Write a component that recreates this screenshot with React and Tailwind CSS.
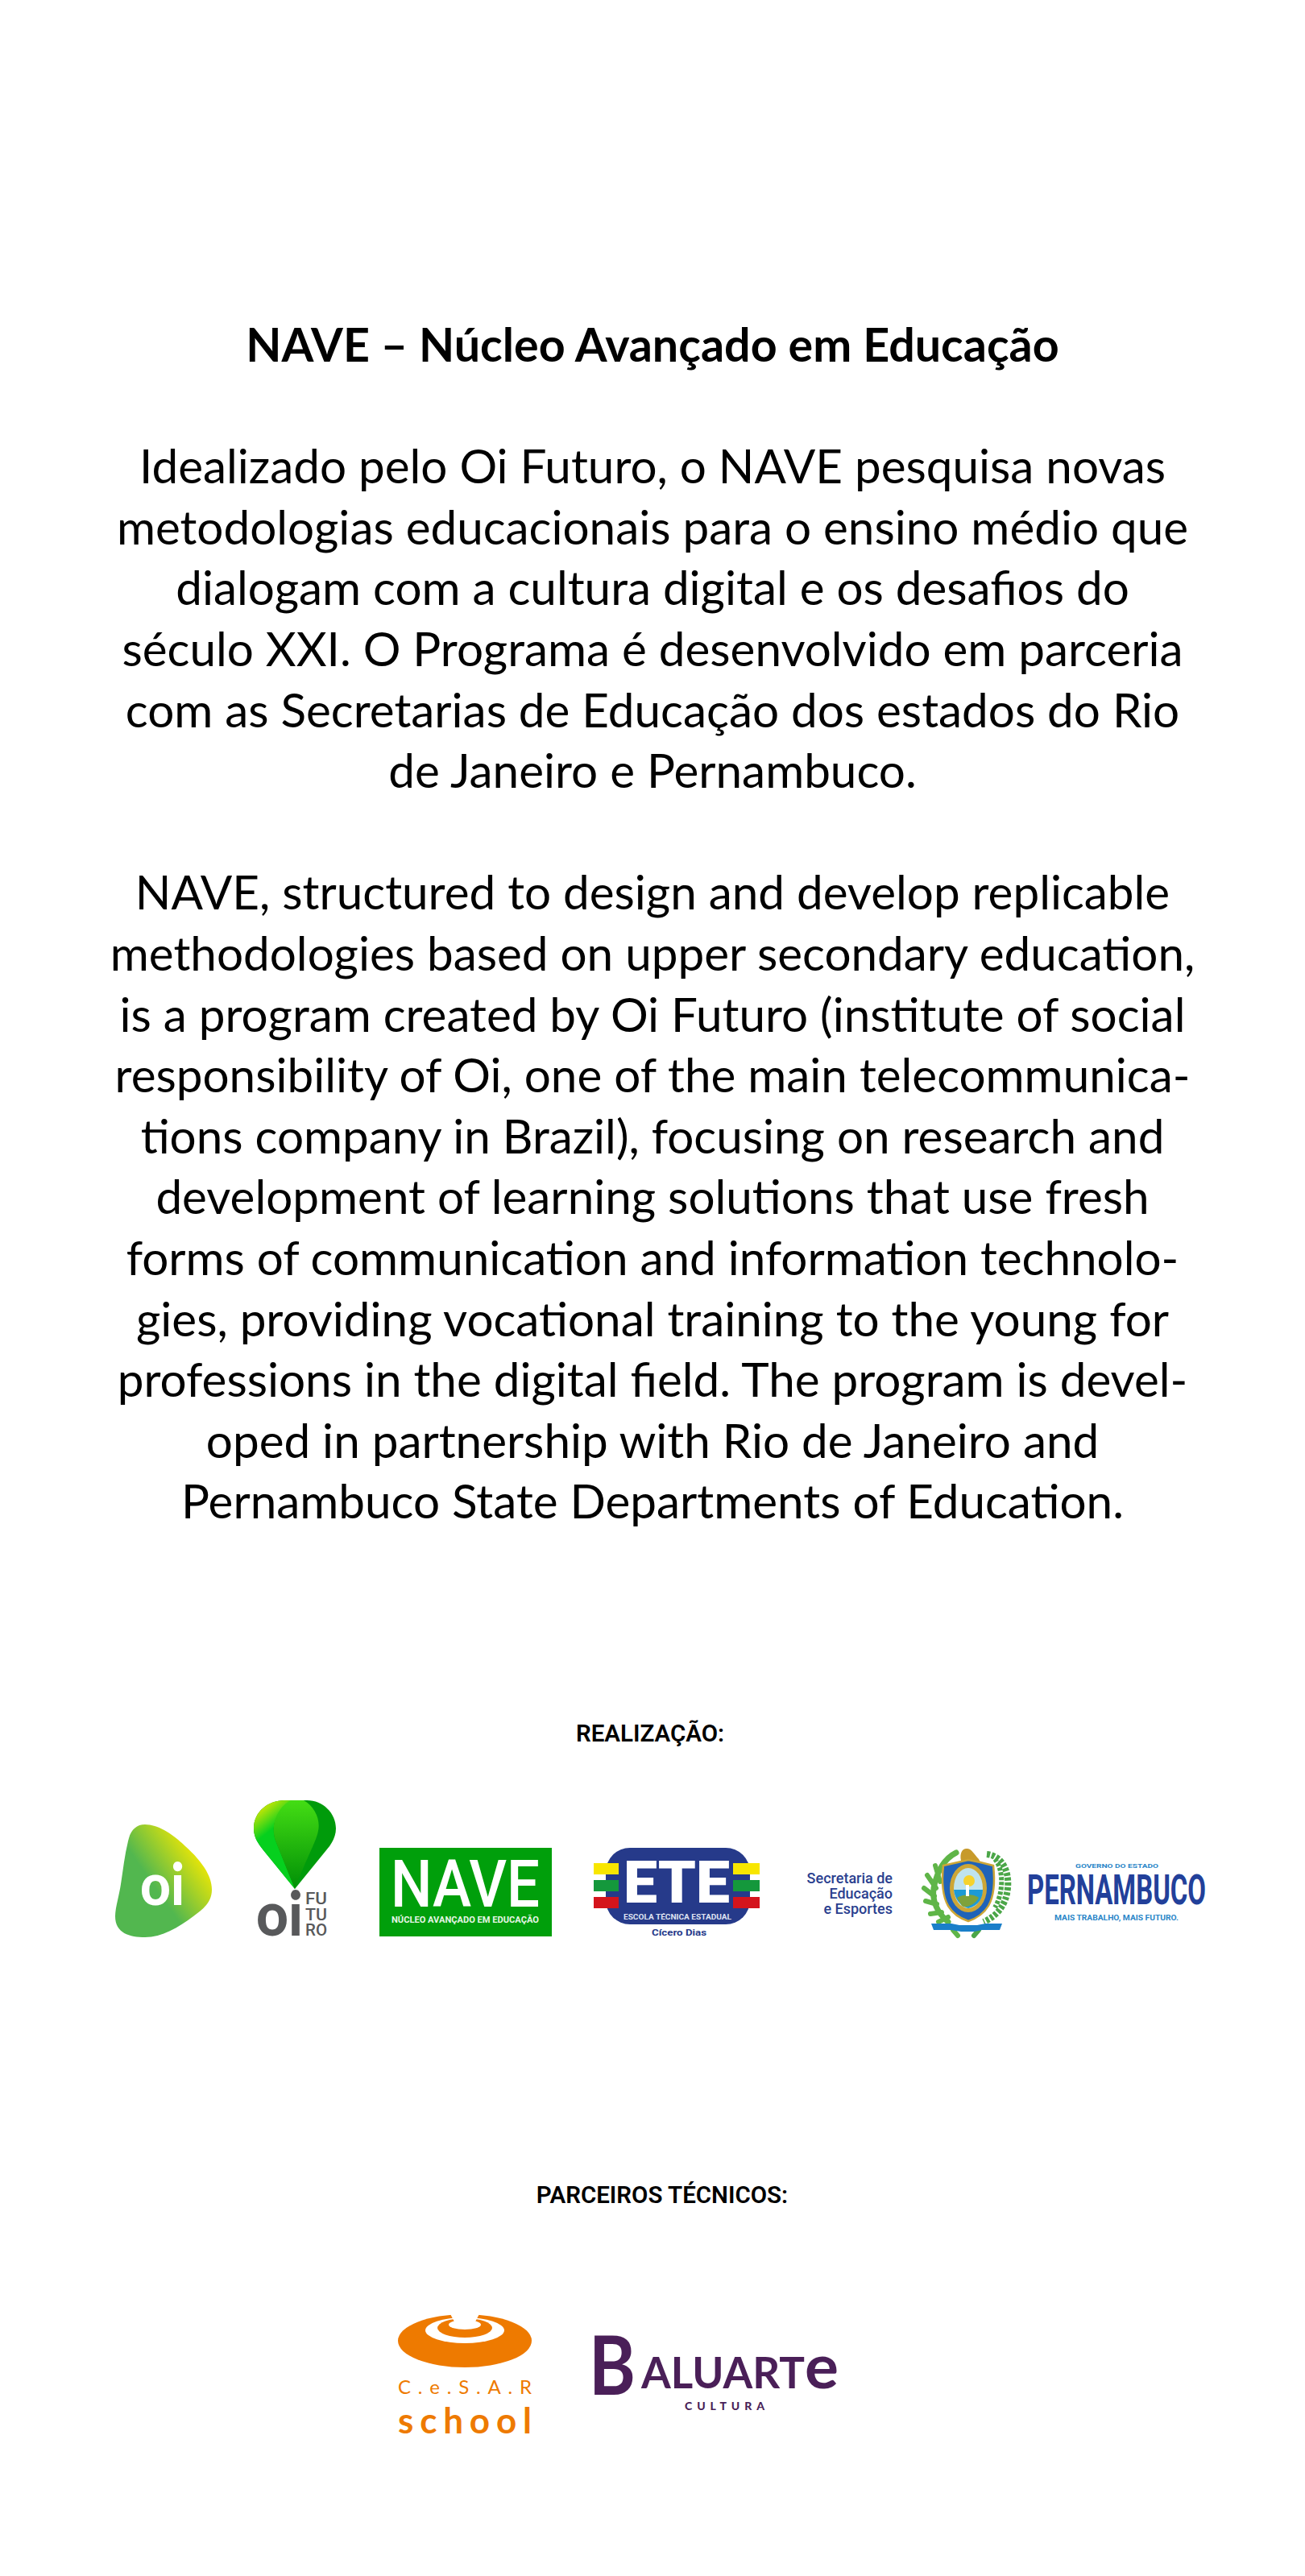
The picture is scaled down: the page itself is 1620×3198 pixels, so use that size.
import React from 'react';

const intro = [
  'Idealizado pelo Oi Futuro, o NAVE pesquisa novas',
  'metodologias educacionais para o ensino médio que',
  'dialogam com a cultura digital e os desafios do',
  'século XXI. O Programa é desenvolvido em parceria',
  'com as Secretarias de Educação dos estados do Rio',
  'de Janeiro e Pernambuco.',
];

const english = [
  'NAVE, structured to design and develop replicable',
  'methodologies based on upper secondary education,',
  'is a program created by Oi Futuro (institute of social',
  'responsibility of Oi, one of the main telecommunica-',
  'tions company in Brazil), focusing on research and',
  'development of learning solutions that use fresh',
  'forms of communication and information technolo-',
  'gies, providing vocational training to the young for',
  'professions in the digital field. The program is devel-',
  'oped in partnership with Rio de Janeiro and',
  'Pernambuco State Departments of Education.',
];

function OiLogo() {
  return (
    <svg width="120" height="141" viewBox="0 0 120 141" className="shrink-0 overflow-visible">
      <defs>
        <linearGradient id="oiFill" gradientUnits="userSpaceOnUse" x1="108" y1="34" x2="48" y2="76">
          <stop offset="0" stopColor="#f7ea00" />
          <stop offset="1" stopColor="#52b74f" />
        </linearGradient>
      </defs>
      <path
        d="M37 0C55 0 75 15 87 27C105 43 120 62 120 81C120 97 108 106 97 114C78 128 58 140 37 140C18 140 0 135 0 114C0 103 5 88 7 74C10 55 12 35 17 17C20 6 27 0 37 0Z"
        fill="url(#oiFill)"
      />
      <text x="31" y="100" fontFamily="Lato" fontWeight="900" fontSize="72" fill="#fff" textLength="55" lengthAdjust="spacingAndGlyphs">oi</text>
    </svg>
  );
}

function OiFuturoLogo() {
  return (
    <svg width="102" height="171" viewBox="0 0 102 171" className="shrink-0 overflow-visible">
      <defs>
        <linearGradient id="balloonLeft" gradientUnits="userSpaceOnUse" x1="8" y1="2" x2="30" y2="30">
          <stop offset="0" stopColor="#f4ea00" />
          <stop offset="1" stopColor="#06d01e" />
        </linearGradient>
        <linearGradient id="balloonMid" gradientUnits="userSpaceOnUse" x1="50" y1="0" x2="50" y2="110">
          <stop offset="0" stopColor="#44dd14" />
          <stop offset="1" stopColor="#008f06" />
        </linearGradient>
      </defs>
      <path d="M51 110L12 62C4 52 0 45 0 35C0 14 18 0 38 0H66C86 0 102 16 102 35C102 45 97 54 90 62Z" fill="#009b0b" />
      <path d="M51 110L12 62C4 52 0 45 0 35C0 14 18 0 38 0H50C30 10 20 30 27 50Z" fill="url(#balloonLeft)" />
      <path d="M51 110L27 50C20 30 30 8 46 0H62C76 8 83 24 80 38C78 50 68 66 51 110Z" fill="url(#balloonMid)" />
      <text x="3" y="168" fontFamily="Lato" fontWeight="900" fontSize="76" fill="#58595b" textLength="58" lengthAdjust="spacingAndGlyphs">oi</text>
      <g fontFamily="Roboto" fontWeight="500" fontSize="20" fill="#58595b">
        <text x="64" y="129" textLength="27" lengthAdjust="spacingAndGlyphs">FU</text>
        <text x="64" y="149" textLength="27" lengthAdjust="spacingAndGlyphs">TU</text>
        <text x="64" y="168" textLength="27" lengthAdjust="spacingAndGlyphs">RO</text>
      </g>
    </svg>
  );
}

function NaveLogo() {
  return (
    <svg width="214" height="110" viewBox="0 0 214 110" className="shrink-0 mb-[2px] overflow-visible">
      <rect width="214" height="110" fill="#009f0b" />
      <text x="14" y="73" fontFamily="Roboto" fontWeight="500" fontSize="82" fill="#fff" textLength="185" lengthAdjust="spacingAndGlyphs">NAVE</text>
      <text x="15" y="93" fontFamily="Roboto" fontWeight="700" fontSize="11" fill="#e6f6e6" textLength="183" lengthAdjust="spacingAndGlyphs">NÚCLEO AVANÇADO EM EDUCAÇÃO</text>
    </svg>
  );
}

function EteLogo() {
  return (
    <svg width="206" height="110" viewBox="0 0 206 110" className="shrink-0 mb-[2px] overflow-visible">
      <rect x="15" y="0" width="179" height="95" rx="30" fill="#263a8a" />
      <rect x="0" y="19" width="31" height="14" fill="#f8e600" />
      <rect x="0" y="40" width="31" height="14" fill="#14983c" />
      <rect x="0" y="61" width="31" height="14" fill="#d4141c" />
      <rect x="173" y="19" width="33" height="14" fill="#f8e600" />
      <rect x="173" y="40" width="33" height="14" fill="#14983c" />
      <rect x="173" y="61" width="33" height="14" fill="#d4141c" />
      <text x="37" y="68" fontFamily="Roboto" fontWeight="900" fontSize="73" fill="#fff" textLength="132" lengthAdjust="spacingAndGlyphs">ETE</text>
      <text x="37" y="89" fontFamily="Roboto" fontWeight="700" fontSize="9" fill="#dfe3f2" textLength="134" lengthAdjust="spacingAndGlyphs">ESCOLA TÉCNICA ESTADUAL</text>
      <text x="72" y="109" fontFamily="Roboto" fontWeight="700" fontSize="11" fill="#263a8a" textLength="68" lengthAdjust="spacingAndGlyphs">Cícero Dias</text>
    </svg>
  );
}

function Secretaria() {
  return (
    <div className="shrink-0 w-[108px] mb-[27px] text-right font-[Roboto,sans-serif] font-medium text-[18px] leading-[19px] text-[#2a3f8f] whitespace-nowrap">
      Secretaria de<br />Educação<br />e Esportes
    </div>
  );
}

function PernambucoLogo() {
  return (
    <svg width="350" height="110" viewBox="0 0 350 110" className="shrink-0 mb-[2px] overflow-visible">
      {/* palm branch */}
      <g fill="none" stroke="#5fb548" strokeLinecap="round">
        <path d="M40 6C24 14 16 30 12 50C10 66 16 80 30 92" strokeWidth="7" />
        <path d="M14 22L20 42M4 34L15 50M0 50L13 60M2 66L16 70M8 82L22 80M18 92L30 86M36 102L42 109" strokeWidth="6" />
      </g>
      {/* laurel */}
      <g fill="none" stroke="#4ba648" strokeWidth="8" strokeDasharray="4 2">
        <path d="M78 8C98 10 106 30 104 50C102 70 92 84 74 92" />
        <path d="M88 14C100 28 98 58 88 74" strokeWidth="6" />
      </g>
      <path d="M68 102L62 109" fill="none" stroke="#4ba648" strokeWidth="6" strokeLinecap="round" />
      {/* lion */}
      <path d="M46 16C44 6 48 0 54 1C60 2 62 8 68 14L70 18H46Z" fill="#c79a2b" />
      {/* shield */}
      <path d="M24 22L42 18L55 15L70 18L86 22C88 40 88 58 80 72C74 82 64 88 55 91C46 88 36 82 30 72C22 58 22 40 24 22Z" fill="#1f63b8" stroke="#cda636" strokeWidth="2.5" />
      <ellipse cx="55" cy="50" rx="23" ry="30" fill="#cda636" />
      <ellipse cx="55" cy="50" rx="18" ry="25" fill="#bfe3ee" />
      <circle cx="56" cy="41" r="7" fill="#f6d22c" />
      <path d="M37 52H73C73 62 68 72 55 75C44 72 38 62 37 52Z" fill="#1d9ad6" />
      <path d="M41 62C50 56 64 58 68 62C64 70 52 76 47 72Z" fill="#7ea23c" />
      <rect x="52" y="46" width="4" height="14" fill="#fff" />
      {/* ribbon */}
      <path d="M9 94H34L44 96H66L76 94H97L94 102H72L62 104H46L34 102H12Z" fill="#1a7fc9" />
      <g fontFamily="Roboto" fontWeight="700" fill="#2a86c8">
        <text x="188" y="25" fontSize="8" textLength="103" lengthAdjust="spacingAndGlyphs">GOVERNO DO ESTADO</text>
        <text x="162" y="90" fontSize="9.5" textLength="154" lengthAdjust="spacingAndGlyphs">MAIS TRABALHO, MAIS FUTURO.</text>
      </g>
      <text x="128" y="70" fontFamily="Roboto" fontWeight="700" fontSize="52" fill="#22409a" textLength="222" lengthAdjust="spacingAndGlyphs">PERNAMBUCO</text>
    </svg>
  );
}

function CesarLogo() {
  return (
    <svg width="166" height="150" viewBox="0 0 166 150" className="shrink-0 overflow-visible">
      <ellipse cx="83" cy="34" rx="83" ry="33" fill="#ee7a00" />
      <ellipse cx="83" cy="21" rx="49" ry="16" fill="#fff" />
      <ellipse cx="83" cy="18" rx="34" ry="12" fill="#ee7a00" />
      <ellipse cx="83" cy="14" rx="20" ry="6" fill="#fff" />
      <path d="M64 -1H102L94 14H72Z" fill="#fff" />
      <g fontFamily="Lato" fill="#ee7a00">
        <text x="0" y="100" fontSize="24" textLength="166">C.e.S.A.R</text>
        <text x="0" y="149" fontSize="44" fontWeight="700" textLength="166">school</text>
      </g>
    </svg>
  );
}

function BaluarteLogo() {
  return (
    <svg width="304" height="93" viewBox="0 0 304 93" className="shrink-0 overflow-visible">
      <g fontFamily="Lato" fill="#4a1f58">
        <text x="-6" y="73" fontSize="101" fontWeight="700" textLength="58" lengthAdjust="spacingAndGlyphs">B</text>
        <text x="59" y="65" fontSize="54" fontWeight="700" textLength="203" lengthAdjust="spacingAndGlyphs">ALUART</text>
        <text x="262" y="65" fontSize="76" fontWeight="700" textLength="42" lengthAdjust="spacingAndGlyphs">e</text>
        <text x="113" y="92" fontSize="14" fontWeight="900" textLength="99">CULTURA</text>
      </g>
    </svg>
  );
}

export default function App() {
  return (
    <div className="min-h-[3198px] bg-white text-black">
      <div className="pt-[389px] text-center font-[Lato,sans-serif] text-[58.4px] leading-[75.6px]">
        <h1 className="font-bold text-[57.4px]">NAVE – Núcleo Avançado em Educação</h1>
        <p className="mt-[75.6px]">
          {intro.map(line => <span key={line} className="block whitespace-nowrap">{line}</span>)}
        </p>
        <p className="mt-[75.6px]">
          {english.map(line => <span key={line} className="block whitespace-nowrap">{line}</span>)}
        </p>
      </div>

      <h2 className="mt-[236px] pr-[6px] text-center font-[Roboto,sans-serif] font-semibold text-[29.5px] leading-[30px]">REALIZAÇÃO:</h2>
      <div className="mt-[68px] pl-[143px] flex items-end">
        <OiLogo />
        <div className="ml-[52px]"><OiFuturoLogo /></div>
        <div className="ml-[54px]"><NaveLogo /></div>
        <div className="ml-[52px]"><EteLogo /></div>
        <div className="ml-[57px]"><Secretaria /></div>
        <div className="ml-[39px]"><PernambucoLogo /></div>
      </div>

      <h2 className="mt-[304px] pl-[24px] text-center font-[Roboto,sans-serif] font-semibold text-[29.5px] leading-[30px]">PARCEIROS TÉCNICOS:</h2>
      <div className="mt-[132px] pl-[494px] flex items-center gap-[77px]">
        <CesarLogo />
        <BaluarteLogo />
      </div>
    </div>
  );
}
